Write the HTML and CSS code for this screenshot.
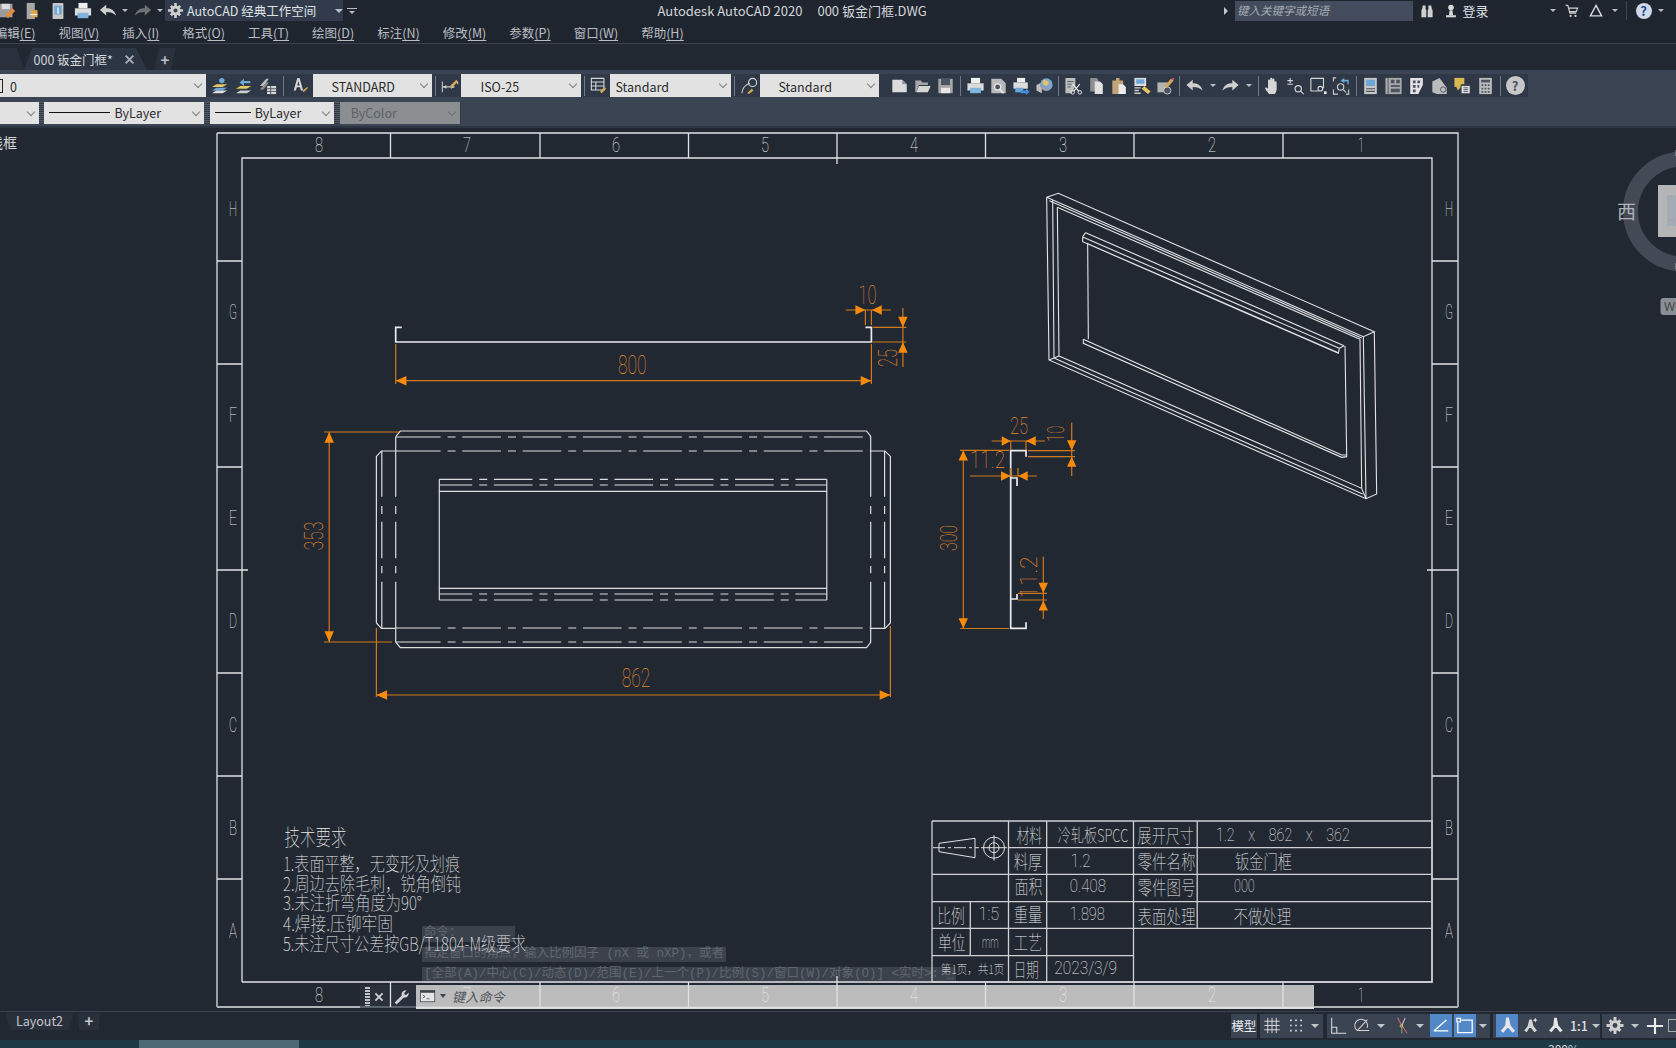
FILE: index.html
```html
<!DOCTYPE html>
<html lang="zh-CN">
<head>
<meta charset="utf-8">
<title>Autodesk AutoCAD 2020</title>
<link rel="stylesheet" href="styles.css">
</head>
<body>
<svg class="defs" width="0" height="0" aria-hidden="true">
  <defs>
    <symbol id="i-new" viewBox="0 0 20 20"><path d="M2 3h11l5 5v9H2z" fill="#dcdcdc"/><path d="M13 3v5h5z" fill="#8d939b"/></symbol>
    <symbol id="i-open" viewBox="0 0 20 20"><path d="M2 17V4h6l2 2h6v3H6l-3 8z" fill="#a7a7a7"/><path d="M6 10h13l-3 7H3z" fill="#d6d6d6"/></symbol>
    <symbol id="i-save" viewBox="0 0 20 20"><path d="M2 2h16v16H2z" fill="#a6a6a6"/><rect x="5" y="2" width="10" height="7" fill="#4c5462"/><rect x="5" y="12" width="10" height="6" fill="#e6e6e6"/></symbol>
    <symbol id="i-print" viewBox="0 0 20 20"><rect x="5" y="1" width="10" height="6" fill="#eee"/><rect x="1" y="7" width="18" height="8" fill="#dcdcdc"/><rect x="4" y="12" width="12" height="6" fill="#7fb2de"/></symbol>
    <symbol id="i-prev" viewBox="0 0 20 20"><path d="M2 2h11l5 5v11H2z" fill="#b9b9b9"/><circle cx="9" cy="11" r="3.4" fill="#4c5462" stroke="#eee" stroke-width="1.3"/><path d="M11.5 14l4 4" stroke="#eee" stroke-width="1.5"/></symbol>
    <symbol id="i-pub" viewBox="0 0 20 20"><rect x="5" y="1" width="9" height="5" fill="#eee"/><rect x="1" y="6" width="16" height="7" fill="#dcdcdc"/><rect x="3" y="12" width="9" height="5" fill="#6ea6d8"/><path d="M9 15h6v-2l4 3.500-4 3.500v-2H9z" fill="#3f8fe0"/></symbol>
    <symbol id="i-globe" viewBox="0 0 20 20"><path d="M1 9l6-3v12l-6-3z" fill="#bfbfbf"/><circle cx="12" cy="8.500" r="7" fill="#7fa6c9"/><path d="M8 4c3-1 6 0 7 3l-3 3-4-2z" fill="#e5c568"/><path d="M7 11c2 0 4 1 5 4l-3-.5z" fill="#d98a6b"/></symbol>
    <symbol id="i-cut" viewBox="0 0 20 20"><path d="M1 1h11v9l-4 8H1z" fill="#bdbdbd"/><path d="M3 5h7M3 8h5M3 11h4" stroke="#4c5462"/><path d="M9 8l7 8M17 8l-7 8" stroke="#eee" stroke-width="1.300"/><circle cx="9" cy="17" r="2" fill="none" stroke="#eee"/><circle cx="17" cy="17" r="2" fill="none" stroke="#eee"/></symbol>
    <symbol id="i-copy" viewBox="0 0 20 20"><path d="M3 1h7l2 2v13H3z" fill="#8f8f8f"/><path d="M8 5h6l3 3v11H8z" fill="#e2e2e2"/></symbol>
    <symbol id="i-paste" viewBox="0 0 20 20"><path d="M2 4h4V1h4v3h4v15H2z" fill="#c3a478"/><path d="M9 8h5l3 3v8H9z" fill="#ececec"/></symbol>
    <symbol id="i-match" viewBox="0 0 20 20"><rect x="1" y="1" width="13" height="9" fill="#dcdcdc"/><rect x="3" y="2.500" width="9" height="5" fill="#6ea6d8"/><path d="M1 12h7M1 15h5M1 18h7" stroke="#c9c9c9" stroke-width="1.500"/><path d="M9 13l3-3 7 6-3 3z" fill="#e3c75f"/></symbol>
    <symbol id="i-block" viewBox="0 0 20 20"><path d="M1 6h12v11H1z" fill="#b4b4b4"/><circle cx="12" cy="15" r="4" fill="#4c5462" stroke="#ccc"/><path d="M9 10l7-8 3 2-7 8z" fill="#d8a55b"/><path d="M16 2l3 2 1-3z" fill="#d25a5a"/></symbol>
    <symbol id="i-undo" viewBox="0 0 20 20"><path d="M1 9l7-6v4c5 0 9 2 11 8-3-3-6-4-11-4v4z" fill="#cfcfcf"/></symbol>
    <symbol id="i-redo" viewBox="0 0 20 20"><path d="M19 9l-7-6v4C7 7 3 9 1 15c3-3 6-4 11-4v4z" fill="#cfcfcf"/></symbol>
    <symbol id="i-hand" viewBox="0 0 20 20"><path d="M6 19c-2-3-5-6-4-7s2 0 3 1V4a1.200 1.200 0 0 1 2.400 0v5-7a1.200 1.200 0 0 1 2.400 0v7-6a1.200 1.200 0 0 1 2.400 0v7-4a1.200 1.200 0 0 1 2.400 0v7c0 3-1 4-2 6z" fill="#d6d6d6"/></symbol>
    <symbol id="i-zoomrt" viewBox="0 0 20 20"><path d="M4 1v6M1 4h6M1 8h6" stroke="#d6d6d6" stroke-width="1.200"/><circle cx="13" cy="13" r="3.500" fill="none" stroke="#d6d6d6" stroke-width="1.300"/><path d="M15.500 15.500l3.500 3.500" stroke="#d6d6d6" stroke-width="1.300"/></symbol>
    <symbol id="i-zoomwin" viewBox="0 0 20 20"><path d="M1.500 1.500h14v11M10 15.500H1.500v-14" fill="none" stroke="#d6d6d6" stroke-width="1.200"/><circle cx="12" cy="13" r="2.600" fill="none" stroke="#d6d6d6" stroke-width="1.200"/><path d="M16 16h3v3h-3z" fill="#eee"/></symbol>
    <symbol id="i-zoomprev" viewBox="0 0 20 20"><path d="M9 4L13 1v2h5v5h-1.500V5H13v2z" fill="#6ea6d8"/><path d="M4 1H1v4M1 14v5h5M18 14v5h-3" fill="none" stroke="#cfcfcf" stroke-width="1.200"/><circle cx="9" cy="11" r="3.500" fill="none" stroke="#cfcfcf" stroke-width="1.300"/><path d="M12 14l3 3" stroke="#cfcfcf" stroke-width="1.300"/></symbol>
    <symbol id="i-props" viewBox="0 0 20 20"><rect x="3" y="1" width="14" height="18" fill="#c7c7c7"/><rect x="5" y="3" width="10" height="7" fill="#6ea6d8"/><path d="M5 13h10M5 16h10" stroke="#4c5462" stroke-width="1.200"/></symbol>
    <symbol id="i-design" viewBox="0 0 20 20"><rect x="1" y="1" width="18" height="18" fill="#a9a9a9"/><path d="M4 1v18" stroke="#4c5462"/><rect x="7" y="3" width="4" height="4" fill="#4c5462"/><rect x="13" y="3" width="4" height="4" fill="#4c5462"/><rect x="7" y="9" width="10" height="2" fill="#4c5462"/><rect x="7" y="13" width="10" height="4" fill="#4c5462"/></symbol>
    <symbol id="i-tool" viewBox="0 0 20 20"><path d="M3 1h14v8l-5 10H3z" fill="#e3e3e3"/><path d="M6 4h3v3H6zM11 4h3v3h-3zM6 9h3v3H6zM6 14h3v3H6zM11 9h2v3h-2z" fill="#4c5462"/></symbol>
    <symbol id="i-sheet" viewBox="0 0 20 20"><path d="M2 17V5l8-4 8 11v7H7z" fill="#bcbcbc"/><circle cx="14" cy="14" r="3" fill="none" stroke="#4c5462"/></symbol>
    <symbol id="i-markup" viewBox="0 0 20 20"><rect x="1" y="1" width="11" height="10" fill="#dcb94f"/><path d="M3 11l2 4 3-4z" fill="#dcb94f"/><rect x="8" y="8" width="11" height="11" fill="#3b4453"/><path d="M9 10h9v8H9z" fill="#dedede"/><path d="M11 12h5M11 14h5M11 16h5" stroke="#4c5462"/></symbol>
    <symbol id="i-calc" viewBox="0 0 20 20"><rect x="3" y="1" width="14" height="18" fill="#bdbdbd"/><rect x="5" y="3" width="10" height="3" fill="#4c5462"/><path d="M5.500 8h2v2h-2zM9 8h2v2H9zM12.500 8h2v2h-2zM5.500 12h2v2h-2zM9 12h2v2H9zM12.500 12h2v2h-2zM5.500 15.500h2v2h-2zM9 15.500h2v2H9zM12.500 15.500h2v2h-2z" fill="#4c5462"/></symbol>
    <symbol id="i-lay1" viewBox="0 0 20 20"><path d="M1 15l5-3h12l-5 3z" fill="#6ea6d8"/><path d="M1 18l5-3h12l-5 3z" fill="#dcdcdc"/><path d="M1 11l5-3h12l-5 3z" fill="#e3c75f"/><circle cx="12" cy="4" r="3" fill="#6ea6d8"/></symbol>
    <symbol id="i-lay2" viewBox="0 0 20 20"><path d="M1 13l5-3h12l-5 3z" fill="#e3c75f"/><path d="M1 18l5-3h12l-5 3z" fill="#cfcfcf"/><path d="M5 6l5-4v2.500h7V7h-7v3z" fill="#6ea6d8"/></symbol>
    <symbol id="i-lay3" viewBox="0 0 20 20"><path d="M1 10l7-8h3L5 10z" fill="#bfbfbf"/><path d="M1 14l7-8h3l-6 8z" fill="#8f8f8f"/><rect x="9" y="10" width="10" height="9" fill="#d8d8d8"/><path d="M9 13h10M9 16h10M13 10v9" stroke="#4c5462"/></symbol>
    <symbol id="i-astyle" viewBox="0 0 20 20"><path d="M7 1h2.500l4 14h-2.500l-1-3.500H6.500L5.500 15H3zM7 9.500h2.500L8.200 4.500z" fill="#d6d6d6"/><path d="M13 15l5-4 1 1-5 5z" fill="#d8a55b"/></symbol>
    <symbol id="i-dstyle" viewBox="0 0 20 20"><path d="M1.500 5v12M18.500 5v3M2 11h13" stroke="#c9c9c9" stroke-width="1.200"/><path d="M2 11l4-2v4zM15 11l-4-2v4z" fill="#c9c9c9"/><path d="M10 10l7-7 2 2-7 7z" fill="#d8a55b"/></symbol>
    <symbol id="i-tstyle" viewBox="0 0 20 20"><path d="M1.500 1.500h14v13h-14zM1.500 5.500h14M1.500 10h14M6.500 5.500v9" fill="none" stroke="#d6d6d6" stroke-width="1.200"/><path d="M11 16l5-5 2 2-5 5z" fill="#d8a55b"/></symbol>
    <symbol id="i-lstyle" viewBox="0 0 20 20"><path d="M2 18c1-6 3-9 9-11" fill="none" stroke="#d6d6d6" stroke-width="1.200"/><circle cx="14" cy="6" r="4.500" fill="none" stroke="#d6d6d6" stroke-width="1.200"/><path d="M8 18l5-5 2 2-5 4z" fill="#d8a55b"/></symbol>
    <symbol id="i-qsave" viewBox="0 0 20 20"><path d="M0 2h15v15H0z" fill="#9c9c9c"/><rect x="3" y="2" width="9" height="6" fill="#dcdcdc"/><path d="M7 15l8-8 3 3-8 8z" fill="#e08a3c"/></symbol>
    <symbol id="i-qdoc" viewBox="0 0 20 20"><path d="M3 1h9v18H3z" fill="#a7a7a7"/><path d="M8 9h7v8H8z" fill="#d9a84f"/><path d="M7 14h8" stroke="#fff"/></symbol>
    <symbol id="i-qphone" viewBox="0 0 20 20"><rect x="4" y="1" width="12" height="18" rx="1" fill="#c7c7c7"/><rect x="6" y="4" width="8" height="10" fill="#6ea6d8"/><path d="M10 6v7" stroke="#fff" stroke-width="1.400"/></symbol>
    <symbol id="i-gear" viewBox="0 0 20 20"><circle cx="10" cy="10" r="6.500" fill="#cfcfcf"/><path d="M8.300 0h3.400v4H8.300zM8.300 16h3.400v4H8.300zM0 8.300h4v3.400H0zM16 8.300h4v3.400h-4zM2.500 5l2.500-2.500 3 3L5.500 8zM15 2.500L17.500 5l-3 3L12 5.500zM2.500 15L5 17.500l3-3L5.500 12zM17.500 15L15 17.500l-3-3 2.500-2.500z" fill="#cfcfcf"/><circle cx="10" cy="10" r="2.800" fill="#3b4453"/></symbol>
    <symbol id="i-bino" viewBox="0 0 20 20"><path d="M3 7l1-5h4v5l1 2v10H2V9zM17 7l-1-5h-4v5l-1 2v10h7V9z" fill="#cfcfcf"/></symbol>
    <symbol id="i-user" viewBox="0 0 20 20"><circle cx="10" cy="5" r="4" fill="#d8d8d8"/><path d="M8 9h4l1 7H7z" fill="#d8d8d8"/><rect x="3" y="16" width="14" height="3" fill="#d8d8d8"/></symbol>
    <symbol id="i-cart" viewBox="0 0 20 20"><path d="M1 2h3l3 11h9M5 6h13l-2 5H6" fill="none" stroke="#cfcfcf" stroke-width="1.700"/><circle cx="8" cy="17" r="1.600" fill="#cfcfcf"/><circle cx="15" cy="17" r="1.600" fill="#cfcfcf"/></symbol>
    <symbol id="i-tri" viewBox="0 0 20 20"><path d="M10 2l8 15H2z" fill="none" stroke="#d6dbe3" stroke-width="2"/></symbol>
    <symbol id="i-grid" viewBox="0 0 20 20"><path d="M5 1v18M10 1v18M15 1v18M1 5h18M1 10h18M1 15h18" stroke="#e0e0e0" stroke-width="1.100"/></symbol>
    <symbol id="i-dots" viewBox="0 0 20 20"><path d="M3 3h2v2H3zM9 3h2v2H9zM15 3h2v2h-2zM3 9h2v2H3zM9 9h2v2H9zM15 9h2v2h-2zM3 15h2v2H3zM9 15h2v2H9zM15 15h2v2h-2z" fill="#dcdcdc"/></symbol>
    <symbol id="i-ortho" viewBox="0 0 20 20"><path d="M2 1v18h17M2 12h6v7" fill="none" stroke="#dcdcdc" stroke-width="1.200"/></symbol>
    <symbol id="i-polar" viewBox="0 0 20 20"><path d="M5 16A7.500 7.500 0 1 1 16.500 13M5 16h14M5 16L17 3" fill="none" stroke="#d0d0d0" stroke-width="1.200"/></symbol>
    <symbol id="i-osnap" viewBox="0 0 20 20"><path d="M6 1l5 9" stroke="#d86b6b" stroke-width="1.200"/><path d="M15 1l-4 9" stroke="#d0d0d0" stroke-width="1.200"/><path d="M11 11v8" stroke="#6bb07a" stroke-width="1.200"/><path d="M12 11l5 8" stroke="#d86b6b" stroke-width="1.200"/><circle cx="10.500" cy="10.500" r="1.500" fill="none" stroke="#e3c75f"/></symbol>
    <symbol id="i-angle" viewBox="0 0 20 20"><path d="M2 16h16M2 16L16 4" fill="none" stroke="#fff" stroke-width="1.500"/></symbol>
    <symbol id="i-rect" viewBox="0 0 20 20"><path d="M6 4h12v14H2V7" fill="none" stroke="#fff" stroke-width="1.400"/><rect x="1" y="2" width="4" height="4" fill="none" stroke="#fff" stroke-width="1.300"/></symbol>
    <symbol id="i-man" viewBox="0 0 20 20"><path d="M9 1h3l2 9 5 6-3 2-4-5-2 0-4 5-3-2 5-6z" fill="#e6e6e6"/></symbol>
    <symbol id="i-man2" viewBox="0 0 20 20"><path d="M8 3h3l2 8 4 5-3 2-4-5-2 0-3 5-3-2 4-5z" fill="#d4d4d4"/><path d="M15 1l1 2 2 .5-2 1-1 2-1-2-2-.5 2-1z" fill="#e6e6e6"/></symbol>
    <symbol id="i-term" viewBox="0 0 20 20"><rect x="0" y="2" width="19" height="15" fill="#e4e4e4" stroke="#3c434c"/><rect x="0" y="2" width="19" height="3" fill="#3c434c"/><path d="M3 8l3 2-3 2M8 13h4" fill="none" stroke="#3c434c"/></symbol>
    <symbol id="i-wrench" viewBox="0 0 20 20"><path d="M2 17l9-9c-1-3 1-7 6-6l-3 3 .5 2 2 .5 3-3c.5 5-3 7-6 6l-9 9z" fill="#d2d2d2"/></symbol>
    <symbol id="i-x" viewBox="0 0 20 20"><path d="M4 4l12 12M16 4L4 16" stroke="#a9aeb5" stroke-width="3"/></symbol>
    <symbol id="i-x2" viewBox="0 0 20 20"><path d="M4 4l12 12M16 4L4 16" stroke="#d2d2d2" stroke-width="3"/></symbol>
    <symbol id="i-plus" viewBox="0 0 20 20"><path d="M10 1v18M1 10h18" stroke="#ececec" stroke-width="2.400"/></symbol>
  </defs>
</svg>

<header class="titlebar">
  <div class="qa">
    <svg class="qi"><use href="#i-qsave"/></svg>
    <svg class="qi"><use href="#i-qdoc"/></svg>
    <svg class="qi"><use href="#i-qphone"/></svg>
    <svg class="qi"><use href="#i-print"/></svg>
    <svg class="qi"><use href="#i-undo"/></svg><span class="tiny"></span>
    <svg class="qi dim"><use href="#i-redo"/></svg><span class="tiny"></span>
  </div>
  <div class="workspace">
    <svg class="wsgear"><use href="#i-gear"/></svg>
    <span class="wstext">AutoCAD 经典工作空间</span>
    <span class="tiny wsarrow"></span>
  </div>
  <span class="qaflyout"><span class="tiny"></span></span>
  <div class="apptitle"><span>Autodesk AutoCAD 2020</span><span>000 钣金门框.DWG</span></div>
  <div class="infocenter">
    <span class="searchcaret"></span>
    <span class="search">键入关键字或短语</span>
    <svg class="ii"><use href="#i-bino"/></svg>
    <svg class="ii nearlogin"><use href="#i-user"/></svg>
    <span class="login">登录</span>
    <span class="tiny t1"></span>
    <svg class="ii"><use href="#i-cart"/></svg>
    <svg class="ii"><use href="#i-tri"/></svg>
    <span class="tiny t2"></span>
    <span class="vsep"></span>
    <span class="helpq">?</span>
    <span class="tiny"></span>
  </div>
</header>

<nav class="menubar">
  <span>编辑<u>(E)</u></span><span>视图<u>(V)</u></span><span>插入<u>(I)</u></span><span>格式<u>(O)</u></span><span>工具<u>(T)</u></span><span>绘图<u>(D)</u></span><span>标注<u>(N)</u></span><span>修改<u>(M)</u></span><span>参数<u>(P)</u></span><span>窗口<u>(W)</u></span><span>帮助<u>(H)</u></span>
</nav>

<div class="doctabs">
  <div class="doctab prev"></div>
  <div class="doctab active"><span>000 钣金门框*</span><svg class="tabx"><use href="#i-x"/></svg></div>
  <div class="doctab plus">+</div>
</div>

<section class="toolbars">
  <div class="row">
    <div class="combo layer"><span class="swatch"></span><span>0</span></div>
    <svg class="ic w24"><use href="#i-lay1"/></svg>
    <svg class="ic w24"><use href="#i-lay2"/></svg>
    <svg class="ic w24"><use href="#i-lay3"/></svg>
    <span class="sep"></span>
    <svg class="ic w26"><use href="#i-astyle"/></svg>
    <div class="combo cw119 p-std">STANDARD</div>
    <span class="sep"></span>
    <svg class="ic w22"><use href="#i-dstyle"/></svg>
    <div class="combo cw120 p-iso">ISO-25</div>
    <span class="sep"></span>
    <svg class="ic w22"><use href="#i-tstyle"/></svg>
    <div class="combo cw121 p-tbl">Standard</div>
    <span class="sep"></span>
    <svg class="ic w22"><use href="#i-lstyle"/></svg>
    <div class="combo cw119 p-lead">Standard</div>
    <div class="iconrun">
      <svg class="ic"><use href="#i-new"/></svg>
      <svg class="ic"><use href="#i-open"/></svg>
      <svg class="ic"><use href="#i-save"/></svg>
      <span class="sep"></span>
      <svg class="ic"><use href="#i-print"/></svg>
      <svg class="ic"><use href="#i-prev"/></svg>
      <svg class="ic"><use href="#i-pub"/></svg>
      <svg class="ic"><use href="#i-globe"/></svg>
      <span class="sep"></span>
      <svg class="ic"><use href="#i-cut"/></svg>
      <svg class="ic"><use href="#i-copy"/></svg>
      <svg class="ic"><use href="#i-paste"/></svg>
      <svg class="ic"><use href="#i-match"/></svg>
      <svg class="ic"><use href="#i-block"/></svg>
      <span class="sep"></span>
      <svg class="ic"><use href="#i-undo"/></svg>
      <span class="tinycell"><span class="tiny"></span></span>
      <svg class="ic"><use href="#i-redo"/></svg>
      <span class="tinycell"><span class="tiny"></span></span>
      <span class="sep"></span>
      <svg class="ic"><use href="#i-hand"/></svg>
      <svg class="ic"><use href="#i-zoomrt"/></svg>
      <svg class="ic"><use href="#i-zoomwin"/></svg>
      <svg class="ic"><use href="#i-zoomprev"/></svg>
      <span class="sep"></span>
      <svg class="ic"><use href="#i-props"/></svg>
      <svg class="ic"><use href="#i-design"/></svg>
      <svg class="ic"><use href="#i-tool"/></svg>
      <svg class="ic"><use href="#i-sheet"/></svg>
      <svg class="ic"><use href="#i-markup"/></svg>
      <svg class="ic"><use href="#i-calc"/></svg>
      <span class="sep"></span>
      <span class="ic helpbtn">?</span>
    </div>
  </div>
  <div class="row second">
    <div class="combo c-a"></div>
    <span class="grip"></span>
    <div class="combo c-b"><span class="linesample l61"></span><span>ByLayer</span></div>
    <span class="grip"></span>
    <div class="combo c-c"><span class="linesample l36"></span><span>ByLayer</span></div>
    <span class="grip"></span>
    <div class="combo c-d">ByColor</div>
  </div>
</section>

<main class="canvas">
  <div class="viewlabel">线框</div>

  <div class="cmdhistory">
    <div class="h1">命令：</div>
    <div>指定窗口的角点，输入比例因子 (nX 或 nXP)，或者</div>
    <div>[全部(A)/中心(C)/动态(D)/范围(E)/上一个(P)/比例(S)/窗口(W)/对象(O)] &lt;实时&gt;: _</div>
  </div>

  <div class="cmdbar">
    <div class="cmdgrip">
      <span class="gripdots"></span>
      <svg class="cmdx"><use href="#i-x2"/></svg>
      <svg class="cmdw"><use href="#i-wrench"/></svg>
    </div>
    <div class="cmdinput">
      <svg class="cmdterm"><use href="#i-term"/></svg>
      <span class="cmdarrow"></span>
      <span class="cmdprompt">键入命令</span>
    </div>
  </div>

  <svg class="drawing" viewBox="0 128 1676 883" width="1676" height="883">
    <!-- sheet frame -->
    <g class="frame">
      <path d="M217 133H1458V1007M217 133V1007M242 982V158H1432V982H242"/>
      <path class="dimline" d="M217 1007H360"/>
      <path class="faint" d="M360 1007H416"/>
      <path d="M416 1007.500H1314"/>
      <path class="dimline" d="M1314 1007H1458"/>
      <path d="M390.500 133V158M540 133V158M688.500 133V158M837 133V164M985.500 133V158M1134 133V158M1283 133V158"/>
      <path d="M390.500 982V1007M540 982V1007M688.500 982V1007M837 976V1007M985.500 982V1007M1134 982V1007M1283 982V1007"/>
      <path d="M217 261H242M217 364H242M217 467H242M217 570H248M217 673H242M217 776H242M217 879H242"/>
      <path d="M1432 261H1458M1432 364H1458M1432 467H1458M1427 570H1458M1432 673H1458M1432 776H1458M1432 879H1458"/>
    </g>
    <g class="gridtext">
      <text x="315" y="152" textLength="8" lengthAdjust="spacingAndGlyphs">8</text>
      <text x="463" y="152" textLength="8" lengthAdjust="spacingAndGlyphs">7</text>
      <text x="612" y="152" textLength="8" lengthAdjust="spacingAndGlyphs">6</text>
      <text x="761" y="152" textLength="8" lengthAdjust="spacingAndGlyphs">5</text>
      <text x="910" y="152" textLength="8" lengthAdjust="spacingAndGlyphs">4</text>
      <text x="1059" y="152" textLength="8" lengthAdjust="spacingAndGlyphs">3</text>
      <text x="1208" y="152" textLength="8" lengthAdjust="spacingAndGlyphs">2</text>
      <text x="1358" y="152" textLength="6" lengthAdjust="spacingAndGlyphs">1</text>
      <text x="315" y="1002" textLength="8" lengthAdjust="spacingAndGlyphs">8</text>
      <text class="onbar" x="463" y="1002" textLength="8" lengthAdjust="spacingAndGlyphs">7</text>
      <text class="onbar" x="612" y="1002" textLength="8" lengthAdjust="spacingAndGlyphs">6</text>
      <text class="onbar" x="761" y="1002" textLength="8" lengthAdjust="spacingAndGlyphs">5</text>
      <text class="onbar" x="910" y="1002" textLength="8" lengthAdjust="spacingAndGlyphs">4</text>
      <text class="onbar" x="1059" y="1002" textLength="8" lengthAdjust="spacingAndGlyphs">3</text>
      <text class="onbar" x="1208" y="1002" textLength="8" lengthAdjust="spacingAndGlyphs">2</text>
      <text x="1358" y="1002" textLength="6" lengthAdjust="spacingAndGlyphs">1</text>
      <text x="229" y="216" textLength="8" lengthAdjust="spacingAndGlyphs">H</text>
      <text x="229" y="319" textLength="8" lengthAdjust="spacingAndGlyphs">G</text>
      <text x="229" y="422" textLength="8" lengthAdjust="spacingAndGlyphs">F</text>
      <text x="229" y="525" textLength="8" lengthAdjust="spacingAndGlyphs">E</text>
      <text x="229" y="628" textLength="8" lengthAdjust="spacingAndGlyphs">D</text>
      <text x="229" y="732" textLength="8" lengthAdjust="spacingAndGlyphs">C</text>
      <text x="229" y="835" textLength="8" lengthAdjust="spacingAndGlyphs">B</text>
      <text x="229" y="938" textLength="8" lengthAdjust="spacingAndGlyphs">A</text>
      <text x="1445" y="216" textLength="8" lengthAdjust="spacingAndGlyphs">H</text>
      <text x="1445" y="319" textLength="8" lengthAdjust="spacingAndGlyphs">G</text>
      <text x="1445" y="422" textLength="8" lengthAdjust="spacingAndGlyphs">F</text>
      <text x="1445" y="525" textLength="8" lengthAdjust="spacingAndGlyphs">E</text>
      <text x="1445" y="628" textLength="8" lengthAdjust="spacingAndGlyphs">D</text>
      <text x="1445" y="732" textLength="8" lengthAdjust="spacingAndGlyphs">C</text>
      <text x="1445" y="835" textLength="8" lengthAdjust="spacingAndGlyphs">B</text>
      <text x="1445" y="938" textLength="8" lengthAdjust="spacingAndGlyphs">A</text>
    </g>

    <!-- top view -->
    <path class="part" d="M401.800 327.300H395.700V342H871.400V327.300H865.400"/>
    <g class="dim">
      <path d="M395.700 344V384M871.400 344V384M395.700 380.700H871.400"/>
      <path d="M865.400 310V325M871.400 310V325M845.700 310H891"/>
      <path d="M872.500 327.300H906.400M872.500 342H906.400M902.900 308V367"/>
      <path class="fill" d="M395.700 380.700l10.700-4.700v9.400zM871.400 380.700l-10.700-4.700v9.400zM865.400 310l-10-4.700v9.400zM871.800 310l10-4.700v9.400zM902.900 327.300l-4.700-10.600h9.400zM902.900 342l-4.700 10.700h9.400z"/>
    </g>
    <g class="dimtext">
      <text x="617.900" y="374" textLength="28.500" lengthAdjust="spacingAndGlyphs">800</text>
      <text x="858.500" y="304" textLength="18" lengthAdjust="spacingAndGlyphs">10</text>
      <text transform="translate(897 367) rotate(-90)" textLength="18" lengthAdjust="spacingAndGlyphs">25</text>
    </g>

    <!-- flat pattern -->
    <g class="part thin">
      <path d="M395.700 436.700L400.300 431H866.500L871 436.700M395.700 642L400.300 647.700H866.500L871 642"/>
      <path d="M395.700 451H381.400L376.400 456.400V622.900L381.400 628.300H395.700M871 451H885L890.400 456.400V622.900L885 628.300H871"/>
      <path d="M439.300 479.300V600M826.800 479.300V600M439.300 491.300H826.800M439.300 588.300H826.800"/>
    </g>
    <g class="part thin dashh">
      <path d="M402 437H871M402 451H871M402 628H871M402 642H871"/>
      <path class="ins" d="M439.300 479.300H826.800M439.300 485H826.800M439.300 594H826.800M439.300 600H826.800"/>
    </g>
    <path class="part thin" d="M395.700 437H402M395.700 451H402M395.700 628H402M395.700 642H402"/>
    <g class="part thin">
      <path class="dashv" d="M381.800 451V628"/>
      <path class="dashv" d="M884.600 451V628"/>
      <path class="dashv2" d="M395.700 436.700V642"/>
      <path class="dashv2" d="M870.700 436.700V642"/>
    </g>
    <g class="dim">
      <path d="M324 432H399M324 642H392M329.200 432V642"/>
      <path d="M376.400 628V697M890.400 626V697M376.400 695H890.400"/>
      <path class="fill" d="M329.200 432l-4.700 10.700h9.400zM329.200 642l-4.700-10.700h9.400zM376.400 695l10.700-4.700v9.400zM890.400 695l-10.700-4.700v9.400z"/>
    </g>
    <g class="dimtext">
      <text x="621.800" y="687.300" textLength="28.500" lengthAdjust="spacingAndGlyphs">862</text>
      <text transform="translate(323 550.500) rotate(-90)" textLength="29" lengthAdjust="spacingAndGlyphs">353</text>
    </g>

    <!-- side view -->
    <path class="part" d="M1026 456.700V450.700H1010.700V628.300H1026V622.300M1010.700 478H1017V486M1010.700 599H1017V594"/>
    <g class="dim">
      <path d="M960 450.300H1009M960 628.500H1009M963.300 450.300V628.500"/>
      <path d="M1010.700 441V450M1026 441V450M991.700 441H1045"/>
      <path d="M1028 450.700H1075M1028 456.700H1075M1071.700 422.700V476"/>
      <path d="M970 476H1036.700M1010.700 468V476M1018 468V476"/>
      <path d="M1018 593.300H1047M1018 600H1047M1043.300 556.700V619"/>
      <path class="fill" d="M963.300 450.300l-4.700 10.300h9.400zM963.300 628.500l-4.700-10.300h9.400zM1010.700 441l-9-4.700v9.400zM1026 441l9.700-4.700v9.400zM1071.700 450.500l-4.700-10.300h9.400zM1071.700 456.700l-4.700 10h9.400zM1010.700 476l-9.700-4.700v9.400zM1018 476l9.700-4.700v9.400zM1043.300 593l-4.700-10.300h9.400zM1043.300 600.500l-4.700 10h9.400z"/>
    </g>
    <g class="dimtext sm">
      <text x="1010" y="434" textLength="18" lengthAdjust="spacingAndGlyphs">25</text>
      <text x="970" y="468.300" textLength="35" lengthAdjust="spacingAndGlyphs">11.2</text>
      <text transform="translate(956.700 551) rotate(-90)" textLength="26" lengthAdjust="spacingAndGlyphs">300</text>
      <text transform="translate(1064.300 441.700) rotate(-90)" textLength="16" lengthAdjust="spacingAndGlyphs">10</text>
      <text transform="translate(1037.300 598.300) rotate(-90)" textLength="42" lengthAdjust="spacingAndGlyphs">11.2</text>
    </g>

    <!-- isometric view -->
    <g class="iso">
      <path d="M380 52L415 40L1363 455L1330 470L380 52M380 52L387 540L1338 956L1370 942L1363 455M1330 470L1338 956"/>
      <path d="M388 62L1325 474M412 82L1320 478"/>
      <path d="M398 60L402 535M412 82L417 528M387 540L417 528M400 533L1328 942M417 528L1325 925L1338 956M1320 478L1325 925"/>
      <path d="M497 158L1272 497M490 172L1258 505M488 170L497 158M488 170V185L1255 520L1258 505L1272 497M500 190L1255 518"/>
      <path d="M503 190L505 478M1275 497L1280 825"/>
      <path d="M490 478L1265 825H1280V830L1265 832L490 490V478"/>
    </g>

    <!-- title block -->
    <g class="tb">
      <path d="M932 821H1432V982H932V821M1008.500 821V982M1046.700 821V982M1133.500 821V982M1197.200 821V928.300M1008.500 847.700H1432M932 874.300H1432M932 901.700H1432M932 928.300H1432M932 955.700H1133.500M970.300 901.700V955.700"/>
      <path class="sym" d="M939 843.300L975 838.300V857.700L939 851.700V843.300"/>
      <path class="sym dash2" d="M933 847.700H979"/>
      <circle class="sym" cx="994" cy="847.700" r="10.500"/>
      <circle class="sym" cx="994" cy="847.700" r="5"/>
      <path class="sym" d="M981 847.700H1007M994 835V860.500"/>
    </g>
    <g class="cad">
      <text x="1016.400" y="843" textLength="25.800" lengthAdjust="spacingAndGlyphs">材料</text>
      <text class="s17" x="1057.700" y="842" textLength="70.600" lengthAdjust="spacingAndGlyphs">冷轧板SPCC</text>
      <text x="1137.600" y="843" textLength="56.200" lengthAdjust="spacingAndGlyphs">展开尺寸</text>
      <text class="num" x="1216" y="841" textLength="133.700" lengthAdjust="spacingAndGlyphs">1.2    x    862    x    362</text>
      <text x="1013.700" y="869" textLength="28.500" lengthAdjust="spacingAndGlyphs">料厚</text>
      <text class="num" x="1070.800" y="866.500" textLength="19.700" lengthAdjust="spacingAndGlyphs">1.2</text>
      <text x="1137.600" y="869" textLength="57.900" lengthAdjust="spacingAndGlyphs">零件名称</text>
      <text x="1235" y="869" textLength="57" lengthAdjust="spacingAndGlyphs">钣金门框</text>
      <text x="1014.700" y="894" textLength="27.500" lengthAdjust="spacingAndGlyphs">面积</text>
      <text class="num" x="1069.800" y="891.500" textLength="36.200" lengthAdjust="spacingAndGlyphs">0.408</text>
      <text x="1137.600" y="895" textLength="57.900" lengthAdjust="spacingAndGlyphs">零件图号</text>
      <text class="num" x="1234" y="891.500" textLength="20.700" lengthAdjust="spacingAndGlyphs">000</text>
      <text x="937.200" y="923" textLength="27.600" lengthAdjust="spacingAndGlyphs">比例</text>
      <text class="num" x="978.500" y="919.500" textLength="20.700" lengthAdjust="spacingAndGlyphs">1:5</text>
      <text x="1013.700" y="922" textLength="28.500" lengthAdjust="spacingAndGlyphs">重量</text>
      <text class="num" x="1069.800" y="919.500" textLength="35" lengthAdjust="spacingAndGlyphs">1.898</text>
      <text x="1137.600" y="924" textLength="57.900" lengthAdjust="spacingAndGlyphs">表面处理</text>
      <text x="1233.400" y="924" textLength="57.900" lengthAdjust="spacingAndGlyphs">不做处理</text>
      <text x="938" y="950" textLength="27.600" lengthAdjust="spacingAndGlyphs">单位</text>
      <text class="num s14" x="982" y="948" textLength="16.500" lengthAdjust="spacingAndGlyphs">mm</text>
      <text x="1013.700" y="950" textLength="28.500" lengthAdjust="spacingAndGlyphs">工艺</text>
      <text class="s13" x="940.700" y="974" textLength="63.700" lengthAdjust="spacingAndGlyphs">第1页，共1页</text>
      <text x="1013.700" y="977" textLength="25" lengthAdjust="spacingAndGlyphs">日期</text>
      <text class="num" x="1054.300" y="973.500" textLength="62.700" lengthAdjust="spacingAndGlyphs">2023/3/9</text>
    </g>

    <!-- notes -->
    <g class="cad">
      <text class="s20" x="284.400" y="845" textLength="62" lengthAdjust="spacingAndGlyphs">技术要求</text>
      <text x="283" y="870.500" textLength="177" lengthAdjust="spacingAndGlyphs">1.表面平整，无变形及划痕</text>
      <text x="283" y="890.500" textLength="178" lengthAdjust="spacingAndGlyphs">2.周边去除毛刺，锐角倒钝</text>
      <text x="283" y="909.500" textLength="139" lengthAdjust="spacingAndGlyphs">3.未注折弯角度为90°</text>
      <text x="283" y="930.500" textLength="110" lengthAdjust="spacingAndGlyphs">4.焊接.压铆牢固</text>
      <text x="283" y="950.500" textLength="243" lengthAdjust="spacingAndGlyphs">5.未注尺寸公差按GB/T1804-M级要求</text>
    </g>

    <!-- view cube -->
    <g class="cube">
      <circle cx="1683" cy="211.500" r="52.500"/>
      <rect class="face" x="1658" y="185" width="18" height="52"/>
      <rect class="faceinner" x="1667" y="195" width="9" height="31"/>
      <path class="tick" d="M1668 220H1676M1676 150v6M1676 263v6"/>
      <text class="west" x="1617" y="219">西</text>
      <rect class="wcsbox" x="1660.500" y="298" width="20" height="17" rx="3"/>
      <text class="wcs" x="1664" y="311">WC</text>
    </g>
  </svg>
</main>

<footer class="bottombar">
  <div class="layouttabs">
    <div class="ltab">Layout2</div>
    <div class="ltab plus">+</div>
  </div>
  <div class="status">
    <div class="sbtn model">模型</div>
    <div class="sgroup ga">
      <svg class="si s24"><use href="#i-grid"/></svg>
      <svg class="si s24"><use href="#i-dots"/></svg>
      <span class="sarrow s14c"></span>
    </div>
    <div class="sgroup gb">
      <svg class="si s23"><use href="#i-ortho"/></svg>
      <svg class="si s23"><use href="#i-polar"/></svg>
      <span class="sarrow s16c"></span>
      <svg class="si s24"><use href="#i-osnap"/></svg>
      <span class="sarrow s15c"></span>
      <svg class="si s22b on"><use href="#i-angle"/></svg>
      <svg class="si s22b on"><use href="#i-rect"/></svg>
      <span class="sarrow s14c"></span>
    </div>
    <div class="sgroup gc">
      <svg class="si s22b on first"><use href="#i-man"/></svg>
      <svg class="si s26"><use href="#i-man2"/></svg>
      <svg class="si s22"><use href="#i-man"/></svg>
      <span class="scale">1:1</span>
      <span class="sarrow s8c"></span>
    </div>
    <div class="sgroup gd">
      <svg class="si s26"><use href="#i-gear"/></svg>
      <span class="sarrow s14c"></span>
      <svg class="si s26 splus"><use href="#i-plus"/></svg>
      <span class="sbox"></span>
    </div>
  </div>
</footer>

<div class="hscroll"><div class="thumb"></div><span class="zoomnote">300%</span></div>
</body>
</html>
```

FILE: styles.css
```css
* { box-sizing: border-box; }
html, body { margin: 0; padding: 0; }
body {
  width: 1676px; height: 1048px; overflow: hidden;
  background: #222831; color: #c9cdd2;
  font-family: "Noto Sans CJK SC", "Noto Sans", sans-serif; font-size: 13px;
  display: flex; flex-direction: column;
}
.defs { position: absolute; width: 0; height: 0; }
svg { display: block; flex: none; }

.tiny { display: inline-block; width: 0; height: 0; border-left: 3px solid transparent; border-right: 3px solid transparent; border-top: 3px solid #b9bec5; flex: none; }

/* title bar */
.titlebar { height: 21px; flex: none; display: flex; align-items: center; background: #1f252e; position: relative; }
.qa { display: flex; align-items: center; width: 166px; flex: none; margin-left: -1px; }
.qi { width: 18px; height: 18px; margin-right: 7px; }
.qi.dim { opacity: .45; margin-left: 2px; }
.qa .tiny { margin-right: 4px; margin-left: -2px; }
.workspace { width: 178px; height: 21px; flex: none; background: #323b4b; display: flex; align-items: center; padding-left: 3px; color: #dfe2e6; }
.wsgear { width: 15px; height: 15px; margin-right: 4px; }
.wstext { width: 136px; white-space: nowrap; font-size: 12.500px; }
.wsarrow { margin-left: 14px; border-left-width: 4px; border-right-width: 4px; border-top-width: 4px; }
.qaflyout { width: 10px; margin-left: 4px; border-top: 1px solid #b9bec5; padding-top: 2px; display: flex; justify-content: center; }
.apptitle { position: absolute; left: 657.500px; top: 0; height: 21px; display: flex; gap: 15px; align-items: center; color: #d3d6da; white-space: nowrap; }
.infocenter { position: absolute; left: 1224px; top: 0; height: 21px; display: flex; align-items: center; }
.searchcaret { width: 0; height: 0; border-top: 4px solid transparent; border-bottom: 4px solid transparent; border-left: 4px solid #c4c8cc; margin-right: 7px; }
.search { width: 178px; height: 20px; background: #434c5c; color: #a5abb3; font-style: italic; font-size: 11.500px; padding-left: 2px; line-height: 18px; margin-right: 7px; }
.ii { width: 14px; height: 16px; margin-right: 9.500px; }
.ii.nearlogin { margin-right: 5px; }
.login { width: 87px; color: #dfe2e6; }
.infocenter .tiny { margin-right: 9.500px; }
.infocenter .tiny.t2 { margin-right: 8px; }
.vsep { width: 1px; height: 19px; background: #3d4552; margin-right: 8.500px; }
.helpq { width: 16px; height: 16px; border-radius: 50%; background: #cfd9ea; color: #1f4f8f; font-weight: 700; font-size: 13px; line-height: 16px; text-align: center; margin-right: 6px; }

/* menu */
.menubar { height: 23px; flex: none; display: flex; gap: 23px; align-items: center; padding-top: 1px; margin-left: -5.300px; background: #1f252e; border-bottom: 1px solid #3a4250; color: #b9bdc3; font-size: 12.500px; white-space: nowrap; width: 1683px; }
.menubar u { text-underline-offset: 2px; }

/* doc tabs */
.doctabs { height: 26px; flex: none; display: flex; align-items: flex-end; background: #222831; }
.doctab { height: 22px; display: flex; align-items: center; }
.doctab.prev { width: 24px; background: #2a313d; clip-path: polygon(0 0, 70% 0, 100% 100%, 0 100%); }
.doctab.active { width: 123px; background: #2c3543; clip-path: polygon(8px 0, 112px 0, 123px 100%, 0 100%); padding-left: 9.500px; color: #d4d7db; font-size: 12.500px; white-space: nowrap; }
.tabx { width: 13px; height: 13px; margin-left: 10px; }
.doctab.plus { width: 22px; margin-left: 7px; background: #2a313d; clip-path: polygon(5px 0, 100% 0, 17px 100%, 0 100%); color: #bcc1c8; justify-content: center; font-size: 15px; font-weight: 700; }

/* toolbars */
.toolbars { height: 58px; flex: none; background: #3b4453; padding-top: 4px; border-bottom: 2px solid #2d3441; }
.row { display: flex; height: 23px; width: 1527.500px; background: #2f3846; align-items: center; }
.row.second { height: 22px; width: 460.600px; margin-top: 5px; }
.combo { height: 100%; flex: none; background: #e2e2e2; color: #2a2a2a; font-size: 12.500px; display: flex; align-items: center; position: relative; white-space: nowrap; padding-top: 1px; }
.second .combo { padding-top: 0; padding-bottom: 2px; }
.combo::after { content: ""; position: absolute; right: 5px; top: 7px; width: 5px; height: 5px; border-right: 1px solid #808080; border-bottom: 1px solid #808080; transform: rotate(45deg); }
.layer { width: 206px; margin-right: 2px; }
.swatch { width: 3px; height: 14px; border: 1px solid #222; border-left: 0; margin-right: 7px; }
.cw119 { width: 119px; } .cw120 { width: 120px; } .cw121 { width: 121px; }
.p-std { padding-left: 18.500px; }
.p-iso { padding-left: 19.500px; }
.p-tbl { padding-left: 5.500px; }
.p-lead { padding-left: 18.500px; }
.ic { width: 23.050px; height: 18px; flex: none; }
.w24 { width: 24px; } .w26 { width: 26px; } .w22 { width: 22px; }
.sep { width: 1px; height: 20px; background: #717985; margin: 0 2.500px; flex: none; }
.row > .sep { margin: 0 3px; }
.iconrun { display: flex; align-items: center; margin-left: 9.400px; }
.tinycell { width: 13px; display: flex; justify-content: center; flex: none; }
.helpbtn { height: 20px; display: flex; align-items: center; justify-content: center; position: relative; color: #4c5462; font-weight: 700; font-size: 13px; z-index: 0; }
.helpbtn::before { content: ""; position: absolute; left: 2px; top: 0; width: 19px; height: 19px; border-radius: 50%; background: #c7c7c7; z-index: -1; }
.c-a { width: 38.600px; }
.c-b { width: 159.500px; padding-left: 5px; }
.c-c { width: 124.800px; padding-left: 5px; }
.c-d { width: 120px; padding-left: 10.500px; background: #8b8e90; color: #5c6068; }
.c-d::after { border-color: #6f7274; }
.grip { width: 5.800px; height: 100%; background: repeating-linear-gradient(#555c68 0 1px, #2f3846 1px 2px); flex: none; }
.linesample { height: 1px; background: #111; margin-right: 4px; flex: none; }
.l61 { width: 61px; } .l36 { width: 36px; }

/* canvas */
.canvas { position: relative; flex: none; height: 883px; background: #222831; overflow: hidden; }
.viewlabel { position: absolute; left: -11px; top: 4px; font-size: 14px; color: #d6d8da; }
.drawing { position: absolute; left: 0; top: 0; }
.cmdhistory { position: absolute; left: 422px; top: 798px; display: flex; flex-direction: column; align-items: flex-start; gap: 5px; font-family: "Liberation Mono", "Noto Sans CJK SC", monospace; font-size: 12.500px; color: #60666f; white-space: nowrap; }
.cmdhistory div { background: #3b424c; height: 15.500px; line-height: 15px; padding: 0 2px; }
.cmdhistory .h1 { width: 93px; }
.cmdbar { position: absolute; left: 360px; top: 857px; width: 954px; height: 24px; display: flex; }
.cmdgrip { width: 56px; height: 23px; background: #29303b; display: flex; align-items: center; flex: none; padding-left: 5px; }
.gripdots { width: 5px; height: 20px; background: repeating-linear-gradient(#c0c3c7 0 2px, transparent 2px 3px); }
.cmdx { width: 12px; height: 12px; margin-left: 3px; }
.cmdw { width: 16px; height: 16px; margin-left: 8px; }
.cmdinput { flex: 1; height: 24px; background: #bcbcbc; border-bottom: 2px solid #d7dadd; display: flex; align-items: center; padding-left: 4px; }
.cmdterm { width: 16px; height: 15px; }
.cmdarrow { width: 0; height: 0; border-left: 3.500px solid transparent; border-right: 3.500px solid transparent; border-top: 4px solid #3c434c; margin-left: 4px; }
.cmdprompt { margin-left: 6px; font-style: italic; color: #50555b; font-size: 13px; letter-spacing: .2px; }

/* drawing */
.frame path { fill: none; stroke: #dfe1e3; stroke-width: 1.300; }
.frame .dimline { stroke: #aeb3b8; stroke-width: 2; }
.frame .faint { stroke: #59616b; stroke-width: 2; }
.gridtext text { font-family: Roboto, "Liberation Sans", sans-serif; font-weight: 100; font-size: 20px; fill: #e6e8ea; }
.gridtext .onbar { fill: #f0f0f0; opacity: .9; }
.part { fill: none; stroke: #e9ebed; stroke-width: 1.700; }
.part.thin { stroke-width: 1.200; stroke: #dbdde0; }
.dashh { stroke-dasharray: 38.600 7 8 6.700; }
.dashh .ins { stroke-dashoffset: 5.700; }
.dashv { stroke-dasharray: 45.700 9.300 8 7.700 36.600 7.700 7.300 8.400 46; }
.dashv2 { stroke-dasharray: 60 9.300 8 7.700 36.600 7.700 7.300 8.400 70; }
.dim path { fill: none; stroke: #d2781c; stroke-width: 1.200; }
.dim .fill { fill: #f88a0c; stroke: none; }
.dimtext text { font-family: Roboto, "Liberation Sans", sans-serif; font-weight: 100; font-size: 26px; fill: #e08a2a; }
.dimtext.sm text { font-size: 24px; }
.iso path { fill: none; stroke: #e2e4e6; stroke-width: 3.300; }
.iso { transform: translate(920px, 180px) scale(.33333); }
.tb path { fill: none; stroke: #cfd1d4; stroke-width: 1.300; }
.tb .sym, .tb circle { fill: none; stroke: #dfe1e3; stroke-width: 1; }
.tb .dash2 { stroke-dasharray: 12 3 3 3; }
.cad text { font-family: "Noto Sans CJK SC", sans-serif; font-weight: 100; font-size: 19px; fill: #eceef0; white-space: pre; }
.cad .num { font-family: Roboto, "Liberation Sans", sans-serif; font-size: 18px; font-weight: 100; fill: #e4e6e8; }
.cad .s17 { font-size: 18px; }
.cad .s14 { font-size: 16px; }
.cad .s13 { font-size: 12.500px; }
.cad .s20 { font-size: 22px; }
.cube circle { fill: none; stroke: #434a55; stroke-width: 15px; }
.face { fill: #b5b5b5; }
.faceinner { fill: #a3abb5; }
.cube .tick { stroke: #9ca1a8; fill: none; }
.west { font-family: "Noto Sans CJK SC", sans-serif; font-size: 19px; fill: #aeb2b8; }
.wcsbox { fill: #8a8f96; }
.wcs { font-family: "Noto Sans", sans-serif; font-size: 12px; fill: #444; }

/* bottom bar */
.bottombar { height: 29px; flex: none; display: flex; background: #222831; border-top: 1px solid #3a4250; align-items: flex-start; }
.layouttabs { display: flex; padding-left: 6px; }
.ltab { height: 17px; background: #29303c; width: 67px; margin-top: 1px; text-align: center; color: #c3c7cc; font-size: 12.500px; line-height: 15px; clip-path: polygon(0 0, 100% 0, 94% 100%, 6% 100%); }
.ltab.plus { width: 22px; margin-left: 5px; font-weight: 700; font-size: 15px; }
.status { margin-left: auto; display: flex; height: 24px; margin-top: 1.500px; color: #dcdfe3; width: 445.300px; }
.sbtn.model { width: 26px; background: #3b4453; text-align: center; font-size: 12.500px; line-height: 23px; color: #eceef0; margin-right: 3.300px; white-space: nowrap; letter-spacing: -.2px; }
.sgroup { display: flex; align-items: center; background: #3a4352; height: 100%; flex: none; }
.ga { width: 62.700px; margin-right: 4px; }
.gb { width: 163.300px; margin-right: 3.300px; }
.gc { width: 106.700px; margin-right: 2px; }
.gd { width: 74px; }
.si { height: 17px; flex: none; }
.s24 { width: 24px; } .s23 { width: 23px; } .s26 { width: 26px; } .s22 { width: 22px; }
.s22b { width: 22px; height: 23px; padding: 2px; }
.s22b.on { background: #5288c8; margin-left: 2px; }
.s22b.first { margin-left: 2.700px; }
.sarrow { flex: none; height: 4px; position: relative; display: block; }
.sarrow::after { content: ""; position: absolute; left: 50%; top: 0; margin-left: -4px; border-left: 4px solid transparent; border-right: 4px solid transparent; border-top: 4px solid #c3c7cc; }
.s14c { width: 14px; } .s16c { width: 16px; } .s15c { width: 15px; } .s8c { width: 8px; }
.scale { width: 26px; text-align: center; font-size: 12.500px; font-weight: 500; }
.splus { height: 18px; }
.sbox { width: 8px; height: 13px; border: 1px solid #aaa; border-right: 0; }

.hscroll { height: 8px; flex: none; background: #1d3a44; position: relative; overflow: hidden; }
.thumb { width: 160px; height: 8px; margin-left: 139px; background: #4d6973; }
.zoomnote { position: absolute; left: 1548px; top: 3px; font-size: 12px; line-height: 12px; color: #c9cdd2; }
```
